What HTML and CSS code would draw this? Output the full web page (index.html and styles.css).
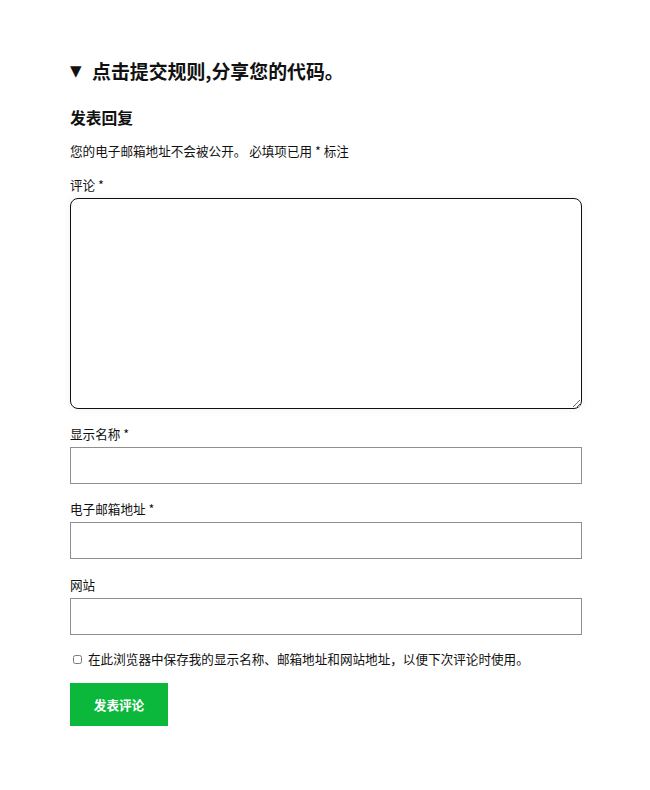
FILE: index.html
```html
<!DOCTYPE html>
<html lang="zh-CN">
<head>
<meta charset="utf-8">
<link rel="stylesheet" href="styles.css">
</head>
<body>
<div class="wrap">
  <div class="rules"><span class="tri">▼</span><span class="rules-text">点击提交规则,分享您的代码。</span></div>
  <h3 class="reply-title">发表回复</h3>
  <p class="notes">您的电子邮箱地址不会被公开。 必填项已用 * 标注</p>
  <div class="field first">
    <label class="lbl">评论 *</label>
    <textarea class="comment"></textarea>
  </div>
  <div class="field after-ta">
    <label class="lbl">显示名称 *</label>
    <input class="inp" type="text">
  </div>
  <div class="field">
    <label class="lbl">电子邮箱地址 *</label>
    <input class="inp" type="text">
  </div>
  <div class="field last">
    <label class="lbl">网站</label>
    <input class="inp" type="text">
  </div>
  <div class="cookie"><input type="checkbox" class="chk"><span>在此浏览器中保存我的显示名称、邮箱地址和网站地址，以便下次评论时使用。</span></div>
  <button class="submit">发表评论</button>
</div>
</body>
</html>
```
FILE: styles.css
```css
html, body { margin: 0; padding: 0; background: #fff; }
body { font-family: "Noto Sans CJK SC", "Noto Sans", sans-serif; color: #111; }
.wrap { width: 512px; padding: 58px 0 0 70px; }
.rules { display: flex; align-items: center; font-size: 18.9px; font-weight: 700; line-height: 26px; color: #111; }
.tri { font-family: "DejaVu Sans", sans-serif; font-size: 15px; width: 22px; }
.reply-title { margin: 23px 0 0; font-size: 15.75px; font-weight: 700; line-height: 22px; }
.notes { margin: 13px 0 0; font-size: 12.6px; line-height: 18px; }
.field { display: flex; flex-direction: column; }
.lbl { font-size: 12.6px; line-height: 20px; margin-top: 15px; margin-bottom: 3px; }
.field.first .lbl { margin-top: 15px; }
.field.after-ta .lbl { margin-top: 15px; }
.field.last .lbl { margin-top: 16px; }
.comment { display: block; box-sizing: border-box; width: 512px; height: 211px; border: 1px solid #111; border-radius: 8px; box-shadow: 0 0 10px rgba(0,0,0,0.06); resize: vertical; margin: 0; padding: 8px; font: inherit; }
.inp { display: block; box-sizing: border-box; width: 512px; height: 37px; border: 1px solid #8f8f8f; border-radius: 0; margin: 0; padding: 4px 8px; font: inherit; }
.cookie { display: flex; align-items: center; gap: 6px; margin-top: 15px; font-size: 12.6px; line-height: 18px; }
.chk { margin: 0 0 0 3px; width: 9px; height: 9px; }
.submit { display: block; margin-top: 15px; width: 98px; height: 43px; border: 0; background: #0bb83c; color: #fff; font: inherit; font-size: 12.6px; font-weight: 700; }
```
